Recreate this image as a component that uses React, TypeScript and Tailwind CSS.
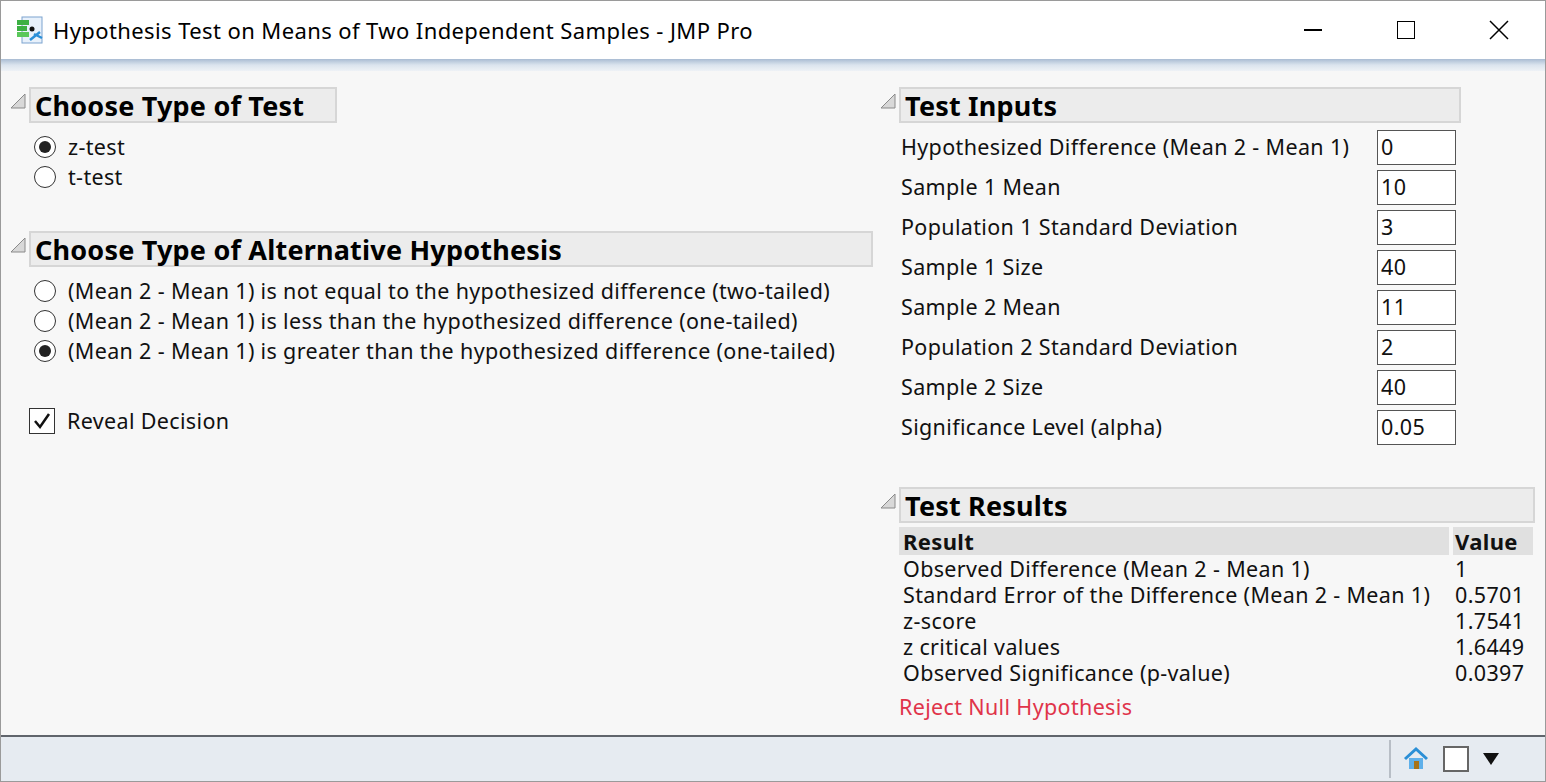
import React from "react";

const Tri = () => (
  <svg width="18" height="18" viewBox="0 0 18 18" className="shrink-0 mb-[8px]">
    <polygon points="16,2 16,16 2,16" fill="#d8d8d8" stroke="#8a8a8a" strokeWidth="1" />
  </svg>
);

const Header = ({ title, w }: { title: string; w: string }) => (
  <div className="flex items-center gap-[2px]">
    <Tri />
    <div className={`${w} h-[36px] bg-[#ececec] border-2 border-[#d6d6d6] flex items-center pl-[4px] text-[27px] font-bold text-black leading-none tracking-[0.2px]`}>{title}</div>
  </div>
);

const Radio = ({ on, label }: { on?: boolean; label: string }) => (
  <div className="flex items-center h-[30px]">
    <div className="w-[22px] h-[22px] rounded-full border-[1.5px] border-[#333] bg-white flex items-center justify-center ml-[25px]">
      {on && <div className="w-[12px] h-[12px] rounded-full bg-[#222]" />}
    </div>
    <span className="ml-[12px]">{label}</span>
  </div>
);

const inputs: [string, string][] = [
  ["Hypothesized Difference (Mean 2 - Mean 1)", "0"],
  ["Sample 1 Mean", "10"],
  ["Population 1 Standard Deviation", "3"],
  ["Sample 1 Size", "40"],
  ["Sample 2 Mean", "11"],
  ["Population 2 Standard Deviation", "2"],
  ["Sample 2 Size", "40"],
  ["Significance Level (alpha)", "0.05"],
];

const results: [string, string][] = [
  ["Observed Difference (Mean 2 - Mean 1)", "1"],
  ["Standard Error of the Difference (Mean 2 - Mean 1)", "0.5701"],
  ["z-score", "1.7541"],
  ["z critical values", "1.6449"],
  ["Observed Significance (p-value)", "0.0397"],
];

export default function App() {
  return (
    <div className="w-[1546px] h-[782px] border border-[#9a9a9a] bg-[#f7f7f7] flex flex-col overflow-hidden text-[#111] text-[21.5px] tracking-[0.35px]" style={{ fontFamily: "'Segoe UI','Noto Sans',sans-serif" }}>
      <div className="h-[58px] bg-white flex items-center shrink-0">
        <svg width="32" height="32" viewBox="0 0 32 32" className="ml-[13px]">
          <rect x="8" y="3" width="20" height="26" fill="#e8f1fb" stroke="#7da3cf" />
          <rect x="3" y="6" width="12" height="5" fill="#3cb043" />
          <rect x="3" y="12" width="10" height="5" fill="#3cb043" />
          <rect x="3" y="18" width="12" height="5" fill="#5ac85a" />
          <circle cx="18" cy="15" r="2.5" fill="#111" />
          <path d="M16 26 L26 18 M20 20 L28 24" stroke="#2a8fd8" strokeWidth="2.5" />
        </svg>
        <span className="ml-[7px] text-[22px] text-black tracking-[0.4px]">Hypothesis Test on Means of Two Independent Samples - JMP Pro</span>
        <div className="ml-auto flex items-center">
          <div className="w-[93px] flex justify-center"><div className="w-[18px] h-[1.5px] bg-black" /></div>
          <div className="w-[93px] flex justify-center"><div className="w-[18px] h-[18px] border-[1.5px] border-black" /></div>
          <div className="w-[93px] flex justify-center">
            <svg width="20" height="20" viewBox="0 0 20 20"><path d="M1 1L19 19M19 1L1 19" stroke="black" strokeWidth="1.5" /></svg>
          </div>
        </div>
      </div>
      <div className="h-[12px] shrink-0 bg-gradient-to-b from-[#a9bcd3] via-[#dbe4ee] to-[#eef2f6]" />
      <div className="flex-1 flex">
        <div className="w-[872px] pl-[8px] pt-[16px]">
          <Header title="Choose Type of Test" w="w-[308px]" />
          <div className="mt-[9px]">
            <Radio on label="z-test" />
            <Radio label="t-test" />
          </div>
          <div className="mt-[39px]"><Header title="Choose Type of Alternative Hypothesis" w="w-[844px]" /></div>
          <div className="mt-[9px]">
            <Radio label="(Mean 2 - Mean 1) is not equal to the hypothesized difference (two-tailed)" />
            <Radio label="(Mean 2 - Mean 1) is less than the hypothesized difference (one-tailed)" />
            <Radio on label="(Mean 2 - Mean 1) is greater than the hypothesized difference (one-tailed)" />
          </div>
          <div className="flex items-center mt-[39px] ml-[20px]">
            <div className="w-[26px] h-[26px] border-[1.5px] border-[#333] bg-white flex items-center justify-center">
              <svg width="20" height="20" viewBox="0 0 20 20"><path d="M3 10 L8 16 L17 3" fill="none" stroke="#111" strokeWidth="2.5" /></svg>
            </div>
            <span className="ml-[12px]">Reveal Decision</span>
          </div>
        </div>
        <div className="flex-1 pl-[6px] pt-[16px]">
          <Header title="Test Inputs" w="w-[562px]" />
          <div className="mt-[4px] ml-[22px]">
            {inputs.map(([l, v]) => (
              <div key={l} className="flex items-center h-[40px]">
                <span className="w-[476px]">{l}</span>
                <div className="w-[79px] h-[35px] bg-white border border-[#555] flex items-center pl-[3px]">{v}</div>
              </div>
            ))}
          </div>
          <div className="mt-[40px]"><Header title="Test Results" w="w-[636px]" /></div>
          <div className="ml-[20px] mt-[4px] w-[636px]">
            <div className="flex h-[28px] font-bold text-[22px] leading-none">
              <div className="w-[550px] bg-[#e0e0e0] flex items-center pl-[4px]">Result</div>
              <div className="w-[80px] ml-[4px] bg-[#e0e0e0] flex items-center pl-[2px]">Value</div>
            </div>
            <div className="mt-[1px]">
              {results.map(([l, v]) => (
                <div key={l} className="flex h-[26px] items-center">
                  <span className="w-[554px] pl-[4px]">{l}</span>
                  <span className="pl-[2px]">{v}</span>
                </div>
              ))}
            </div>
            <div className="text-[#e0344a] mt-[5px]">Reject Null Hypothesis</div>
          </div>
        </div>
      </div>
      <div className="h-[46px] shrink-0 bg-[#e6ebf1] border-t-2 border-[#60656c] flex items-center justify-end">
        <div className="h-[38px] border-l-2 border-[#b8bec6] flex items-center pl-[12px] pr-[18px] gap-[14px]">
          <svg width="26" height="26" viewBox="0 0 26 26">
            <path d="M2 13 L13 3 L24 13" fill="none" stroke="#2b8fd6" strokeWidth="3" />
            <rect x="6" y="12" width="14" height="11" fill="#5fb0ea" />
            <rect x="11" y="15" width="5" height="8" fill="#a8741a" />
          </svg>
          <div className="w-[26px] h-[26px] bg-white border-2 border-[#666]" />
          <svg width="16" height="12" viewBox="0 0 16 12"><polygon points="0,0 16,0 8,12" fill="#111" /></svg>
          <div className="w-[14px]" />
        </div>
      </div>
    </div>
  );
}
